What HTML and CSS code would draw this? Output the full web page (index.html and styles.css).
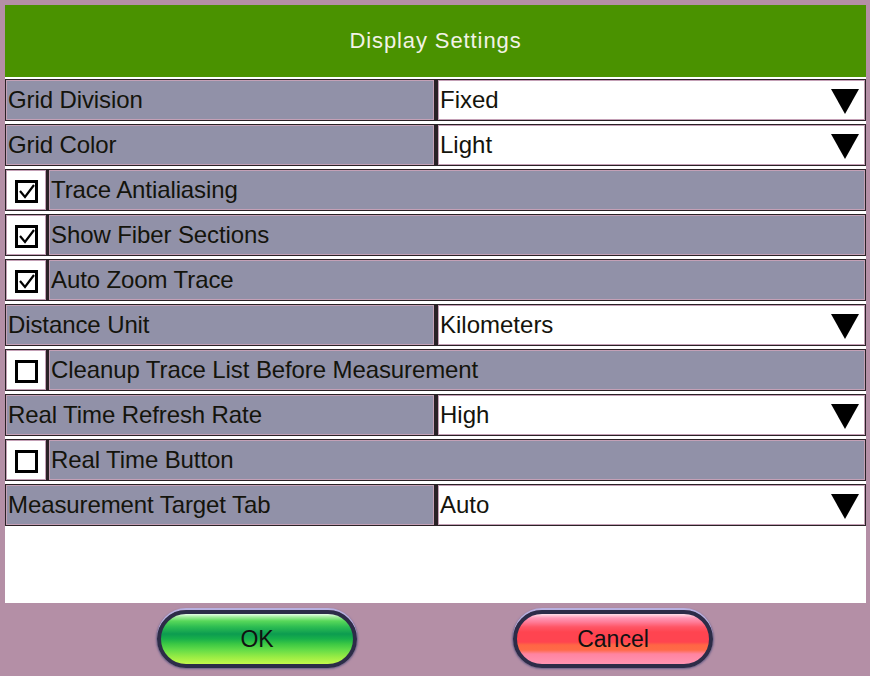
FILE: index.html
```html
<!DOCTYPE html>
<html>
<head>
<meta charset="utf-8">
<link rel="stylesheet" href="styles.css">
</head>
<body>
<div class="dialog">
  <div class="panel">
    <div class="header">Display Settings</div>
    <div class="rows">
      <div class="row">
        <div class="cell label half">Grid Division</div>
        <div class="cell select"><span>Fixed</span><svg class="arrow" viewBox="0 0 28 25"><polygon points="0,0 28,0 14,25"/></svg></div>
      </div>
      <div class="row">
        <div class="cell label half">Grid Color</div>
        <div class="cell select"><span>Light</span><svg class="arrow" viewBox="0 0 28 25"><polygon points="0,0 28,0 14,25"/></svg></div>
      </div>
      <div class="row">
        <div class="cell check"><span class="box"><svg viewBox="0 0 17 17"><polyline points="2,8 7,14 16,2"/></svg></span></div>
        <div class="cell label grow">Trace Antialiasing</div>
      </div>
      <div class="row">
        <div class="cell check"><span class="box"><svg viewBox="0 0 17 17"><polyline points="2,8 7,14 16,2"/></svg></span></div>
        <div class="cell label grow">Show Fiber Sections</div>
      </div>
      <div class="row">
        <div class="cell check"><span class="box"><svg viewBox="0 0 17 17"><polyline points="2,8 7,14 16,2"/></svg></span></div>
        <div class="cell label grow">Auto Zoom Trace</div>
      </div>
      <div class="row">
        <div class="cell label half">Distance Unit</div>
        <div class="cell select"><span>Kilometers</span><svg class="arrow" viewBox="0 0 28 25"><polygon points="0,0 28,0 14,25"/></svg></div>
      </div>
      <div class="row">
        <div class="cell check"><span class="box"></span></div>
        <div class="cell label grow">Cleanup Trace List Before Measurement</div>
      </div>
      <div class="row">
        <div class="cell label half">Real Time Refresh Rate</div>
        <div class="cell select"><span>High</span><svg class="arrow" viewBox="0 0 28 25"><polygon points="0,0 28,0 14,25"/></svg></div>
      </div>
      <div class="row">
        <div class="cell check"><span class="box"></span></div>
        <div class="cell label grow">Real Time Button</div>
      </div>
      <div class="row">
        <div class="cell label half">Measurement Target Tab</div>
        <div class="cell select"><span>Auto</span><svg class="arrow" viewBox="0 0 28 25"><polygon points="0,0 28,0 14,25"/></svg></div>
      </div>
    </div>
  </div>
  <div class="footer">
    <button class="btn ok">OK</button>
    <button class="btn cancel">Cancel</button>
  </div>
</div>
</body>
</html>
```
FILE: styles.css
```css
html, body {
  margin: 0;
  padding: 0;
}
body {
  background: #b48fa6;
  font-family: "Liberation Sans", Arial, sans-serif;
  width: 870px;
  height: 676px;
  overflow: hidden;
}
.dialog {
  display: flex;
  flex-direction: column;
  height: 676px;
}
.panel {
  margin: 5px 4px 0 5px;
  height: 598px;
  background: #ffffff;
  display: flex;
  flex-direction: column;
}
.header {
  height: 72px;
  background: #4a9200;
  color: #f2f2e6;
  font-size: 22px;
  letter-spacing: 0.9px;
  display: flex;
  align-items: center;
  justify-content: center;
}
.rows {
  margin-top: 2px;
  display: flex;
  flex-direction: column;
  gap: 3px;
}
.row {
  display: flex;
  height: 42px;
}
.cell {
  box-sizing: border-box;
  height: 42px;
  border: 1px solid #2a2226;
  box-shadow: inset 0 0 0 1px #c4a0b6;
  display: flex;
  align-items: center;
}
.label {
  background: #9191a8;
  color: #14140c;
  font-size: 24px;
  letter-spacing: -0.1px;
  padding-left: 2px;
  white-space: nowrap;
}
.half {
  width: 431px;
  border-right-width: 2px;
}
.grow {
  flex: 1;
}
.select {
  flex: 1;
  background: #ffffff;
  color: #14140c;
  font-size: 24px;
  padding: 0 6px 0 2px;
  border-left-width: 2px;
  justify-content: space-between;
}
.arrow {
  width: 28px;
  height: 25px;
  fill: #000;
  margin-top: 2px;
}
.check {
  width: 43px;
  background: #ffffff;
  justify-content: center;
  border-right-width: 2px;
}
.box {
  box-sizing: border-box;
  width: 23px;
  height: 23px;
  border: 3px solid #000;
  display: flex;
  align-items: center;
  justify-content: center;
  margin-top: 2px;
}
.box svg {
  width: 17px;
  height: 17px;
  fill: none;
  stroke: #000;
  stroke-width: 2.2;
}
.footer {
  flex: 1;
  display: flex;
  justify-content: center;
  align-items: flex-start;
  gap: 156px;
  padding-top: 7px;
}
.btn {
  box-sizing: border-box;
  width: 200px;
  height: 58px;
  border: 4px solid #2c2c48;
  border-radius: 29px;
  font-family: "Liberation Sans", Arial, sans-serif;
  font-size: 23px;
  color: #111;
  padding: 0;
  box-shadow: 0 -2px 0 #b8b0e0, 0 0 2px 1px #6a6088;
}
.ok {
  background: linear-gradient(to bottom,
    #e8ffe8 0%, #a0ec9c 6%, #58d85a 14%, #2cbc52 26%, #0c9c50 40%,
    #18b04a 50%, #3cc844 60%, #64dc48 72%, #98ec44 86%, #c4f84c 100%);
}
.cancel {
  background: linear-gradient(to bottom,
    #ffe0ea 0%, #ff98b6 8%, #ff7c98 16%, #ff5666 26%, #ff4450 36%,
    #ff4450 56%, #ff6644 62%, #ff6a48 72%, #ff84a0 80%, #ff94b2 100%);
}
```
